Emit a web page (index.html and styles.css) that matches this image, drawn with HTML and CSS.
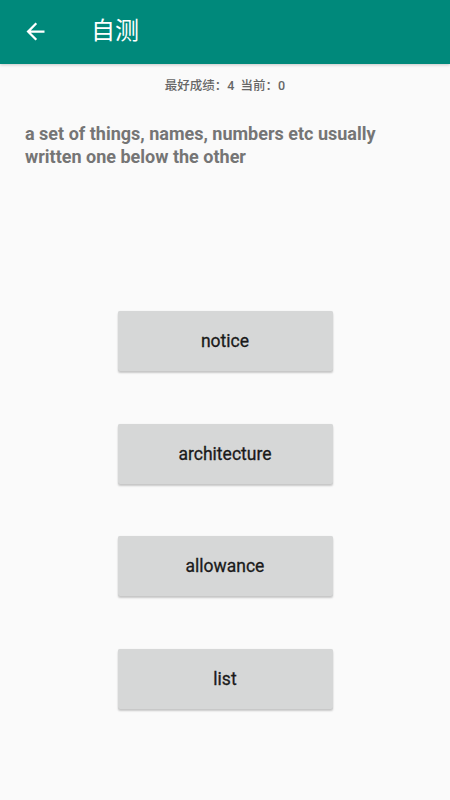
FILE: index.html
```html
<!DOCTYPE html>
<html>
<head>
<meta charset="utf-8">
<link rel="stylesheet" href="styles.css">
</head>
<body>
<header class="appbar">
  <span class="back">
    <svg width="27" height="27" viewBox="0 0 24 24"><path d="M20 11H7.83l5.59-5.59L12 4l-8 8 8 8 1.41-1.41L7.83 13H20v-2z" fill="#fff"/></svg>
  </span>
  <h1 class="title">自测</h1>
</header>
<main class="content">
  <p class="score">最好成绩：4&nbsp; 当前：0</p>
  <p class="definition">a set of things, names, numbers etc usually written one below the other</p>
  <div class="options">
    <button class="option">notice</button>
    <button class="option">architecture</button>
    <button class="option">allowance</button>
    <button class="option">list</button>
  </div>
</main>
</body>
</html>
```
FILE: styles.css
```css
html, body {
  margin: 0;
  padding: 0;
  background: #fafafa;
  font-family: Roboto, "Noto Sans CJK SC", sans-serif;
}
.appbar {
  height: 64px;
  background: #00897b;
  display: flex;
  align-items: center;
  box-shadow: 0 1px 3px rgba(0,0,0,0.2);
}
.back {
  width: 27px;
  height: 27px;
  margin-left: 22px;
  margin-bottom: 2px;
  display: flex;
}
.title {
  margin: 0 0 0 42px;
  color: #fff;
  font-size: 24px;
  font-weight: 400;
  font-family: "Noto Sans CJK SC", sans-serif;
  line-height: 1;
  padding-bottom: 6px;
}
.content {
  display: flex;
  flex-direction: column;
  padding-bottom: 20px;
}
.score {
  margin: 14px 0 0;
  text-align: center;
  font-size: 12.5px;
  color: #666;
  font-weight: 500;
  line-height: 16px;
  font-family: Roboto, "Noto Sans CJK SC", sans-serif;
}
.definition {
  margin: 28px 25px 0;
  font-size: 18px;
  font-weight: 700;
  color: #757575;
  line-height: 23px;
}
.options {
  margin-top: 143px;
  display: flex;
  flex-direction: column;
  align-items: center;
  gap: 52.7px;
}
.option {
  width: 215px;
  height: 60px;
  border: none;
  border-radius: 2px;
  background: #d6d7d7;
  box-shadow: 0 2px 2px rgba(0,0,0,0.2), 0 0 1px rgba(0,0,0,0.12);
  font-family: Roboto, sans-serif;
  font-size: 17.5px;
  font-weight: 400;
  color: #1a1a1a;
  padding: 0;
  -webkit-text-stroke: 0.3px #1a1a1a;
}
```
